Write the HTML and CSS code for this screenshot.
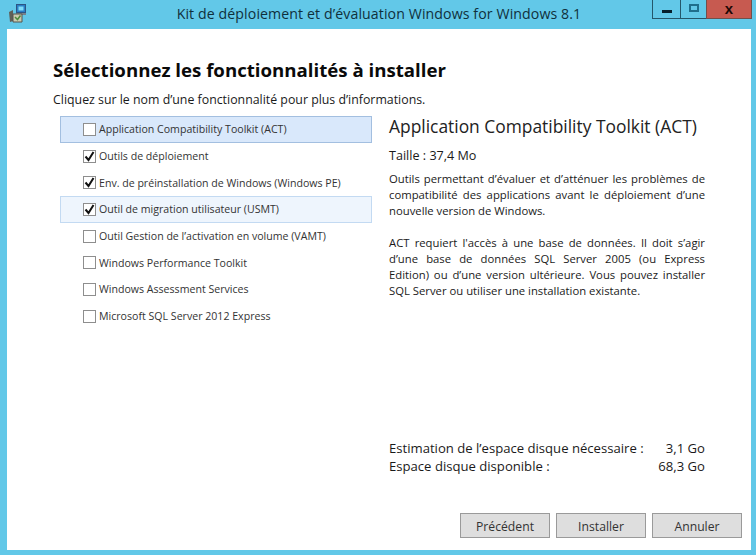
FILE: index.html
```html
<!DOCTYPE html>
<html lang="fr">
<head>
<meta charset="utf-8">
<title>Kit de déploiement et d'évaluation Windows for Windows 8.1</title>
<link rel="stylesheet" href="styles.css">
</head>
<body>
<div class="window">
  <header class="titlebar">
    <svg class="app-icon" width="17" height="19" viewBox="0 0 17 19">
      <rect x="7.5" y="0.5" width="9" height="8" fill="#2a7fc4" stroke="#2c5585"/>
      <rect x="9.5" y="2.5" width="5" height="4" fill="#7fdcf8"/>
      <path d="M7 9h10v2H7z" fill="#77838c"/>
      <path d="M0 8l4-2v11l-3 1z" fill="#5f5f58"/>
      <path d="M4 10h9v8H4z" fill="#c9c9b0" stroke="#55554c"/>
      <path d="M6 13l2.5 2.5 3-4" fill="none" stroke="#4c8a3c" stroke-width="1.5"/>
    </svg>
    <div class="title">Kit de déploiement et d’évaluation Windows for Windows 8.1</div>
    <div class="controls">
      <div class="ctl ctl-min"><span class="min-glyph"></span></div>
      <div class="ctl ctl-max"><span class="max-glyph"></span></div>
      <div class="ctl ctl-close">x</div>
    </div>
  </header>
  <main class="dialog">
    <h1 class="heading">Sélectionnez les fonctionnalités à installer</h1>
    <p class="hint">Cliquez sur le nom d’une fonctionnalité pour plus d’informations.</p>
    <div class="columns">
      <ul class="features">
        <li class="row row-selected"><span class="box"></span>Application Compatibility Toolkit (ACT)</li>
        <li class="row"><span class="box checked"><svg width="11" height="11" viewBox="0 0 11 11"><path d="M1.5 5.5l3 3.5 5-8" fill="none" stroke="#111" stroke-width="2"/></svg></span>Outils de déploiement</li>
        <li class="row"><span class="box checked"><svg width="11" height="11" viewBox="0 0 11 11"><path d="M1.5 5.5l3 3.5 5-8" fill="none" stroke="#111" stroke-width="2"/></svg></span>Env. de préinstallation de Windows (Windows PE)</li>
        <li class="row row-hover"><span class="box checked"><svg width="11" height="11" viewBox="0 0 11 11"><path d="M1.5 5.5l3 3.5 5-8" fill="none" stroke="#111" stroke-width="2"/></svg></span>Outil de migration utilisateur (USMT)</li>
        <li class="row"><span class="box"></span>Outil Gestion de l’activation en volume (VAMT)</li>
        <li class="row"><span class="box"></span>Windows Performance Toolkit</li>
        <li class="row"><span class="box"></span>Windows Assessment Services</li>
        <li class="row"><span class="box"></span>Microsoft SQL Server 2012 Express</li>
      </ul>
      <section class="details">
        <h2 class="d-title">Application Compatibility Toolkit (ACT)</h2>
        <p class="d-size">Taille : 37,4 Mo</p>
        <p class="d-text">Outils permettant d’évaluer et d’atténuer les problèmes de compatibilité des applications avant le déploiement d’une nouvelle version de Windows.</p>
        <p class="d-text">ACT requiert l'accès à une base de données. Il doit s’agir d’une base de données SQL Server 2005 (ou Express Edition) ou d’une version ultérieure. Vous pouvez installer SQL Server ou utiliser une installation existante.</p>
        <dl class="disk">
          <div class="disk-row"><dt>Estimation de l’espace disque nécessaire :</dt><dd>3,1 Go</dd></div>
          <div class="disk-row"><dt>Espace disque disponible :</dt><dd>68,3 Go</dd></div>
        </dl>
      </section>
    </div>
    <footer class="buttons">
      <button class="btn">Précédent</button>
      <button class="btn">Installer</button>
      <button class="btn">Annuler</button>
    </footer>
  </main>
</div>
</body>
</html>
```
FILE: styles.css
```css
* { box-sizing: border-box; }
html, body { margin: 0; height: 100%; }
body { width: 756px; height: 555px; overflow: hidden; background: #62c8e8; font-family: "Open Sans", "Noto Sans", sans-serif; color: #1a1a1a; }
.window { display: flex; flex-direction: column; height: 555px; padding: 0 5px 5px 7px; }
.titlebar { display: flex; align-items: flex-start; height: 29px; flex: none; position: relative; }
.app-icon { margin: 4px 0 0 2px; }
.title { position: absolute; left: 0; width: 744px; top: 5px; text-align: center; font-size: 14.15px; line-height: 18px; color: #10303c; letter-spacing: .1px; }
.controls { position: absolute; top: 0; right: -1px; display: flex; height: 19px; }
.ctl { height: 19px; border: 1px solid #24576b; border-top: 0; display: flex; align-items: center; justify-content: center; }
.ctl-min { width: 29px; }
.ctl-max { width: 25px; border-left: 0; border-right: 0; }
.ctl-close { width: 46px; background: #c75a50; border-color: #70504c; font: bold 15px/16px "Liberation Sans", sans-serif; color: #1e0806; }
.min-glyph { display: block; width: 10px; height: 3px; background: #06202c; margin-top: 4px; }
.max-glyph { display: block; width: 10px; height: 8px; border: 2px solid #1f6e8c; margin-top: -2px; }
.dialog { flex: 1; background: #fff; display: flex; flex-direction: column; padding: 29px 9px 12px 46px; min-height: 0; }
.heading { margin: 0; font-size: 18.65px; line-height: 24px; font-weight: 700; color: #0a0a0a; }
.hint { margin: 10px 0 0; font-size: 12.35px; line-height: 16px; }
.columns { display: flex; flex: 1; margin-top: 8px; min-height: 0; }
.features { list-style: none; margin: 0 0 0 7px; padding: 0; width: 312px; flex: none; }
.row { height: 26.7px; display: flex; align-items: center; padding-left: 22px; font-size: 10.6px; color: #333; border: 1px solid transparent; }
.row-selected { background: #d9e8fb; border-color: #a3bfe0; }
.row-hover { background: #eef5fd; border-color: #c3daf2; }
.box { width: 13px; height: 13px; border: 1px solid #8e8e8e; background: #fff; margin-right: 3px; display: flex; align-items: center; justify-content: center; flex: none; }
.details { margin-left: 17px; width: 316px; display: flex; flex-direction: column; }
.d-title { margin: -1px 0 0; font-size: 17.4px; line-height: 22px; font-weight: 400; color: #222; }
.d-size { margin: 11px 0 0; font-size: 12.6px; line-height: 16px; }
.d-text { margin: 7px 0 0; font-size: 11.3px; line-height: 16px; text-align: justify; }
.d-text + .d-text { margin-top: 16px; }
.disk { margin: auto 0 38px; font-size: 13.12px; line-height: 18px; }
.disk-row { display: flex; }
.disk-row dt { width: 259px; }
.disk-row dd { margin: 0; flex: 1; text-align: right; }
.buttons { display: flex; justify-content: flex-end; gap: 6px; flex: none; }
.btn { width: 90px; height: 25px; border: 1px solid #9a9a9a; background: #dedede; font: 12.2px "Open Sans", sans-serif; color: #333; padding: 1px 0 0; }
```
